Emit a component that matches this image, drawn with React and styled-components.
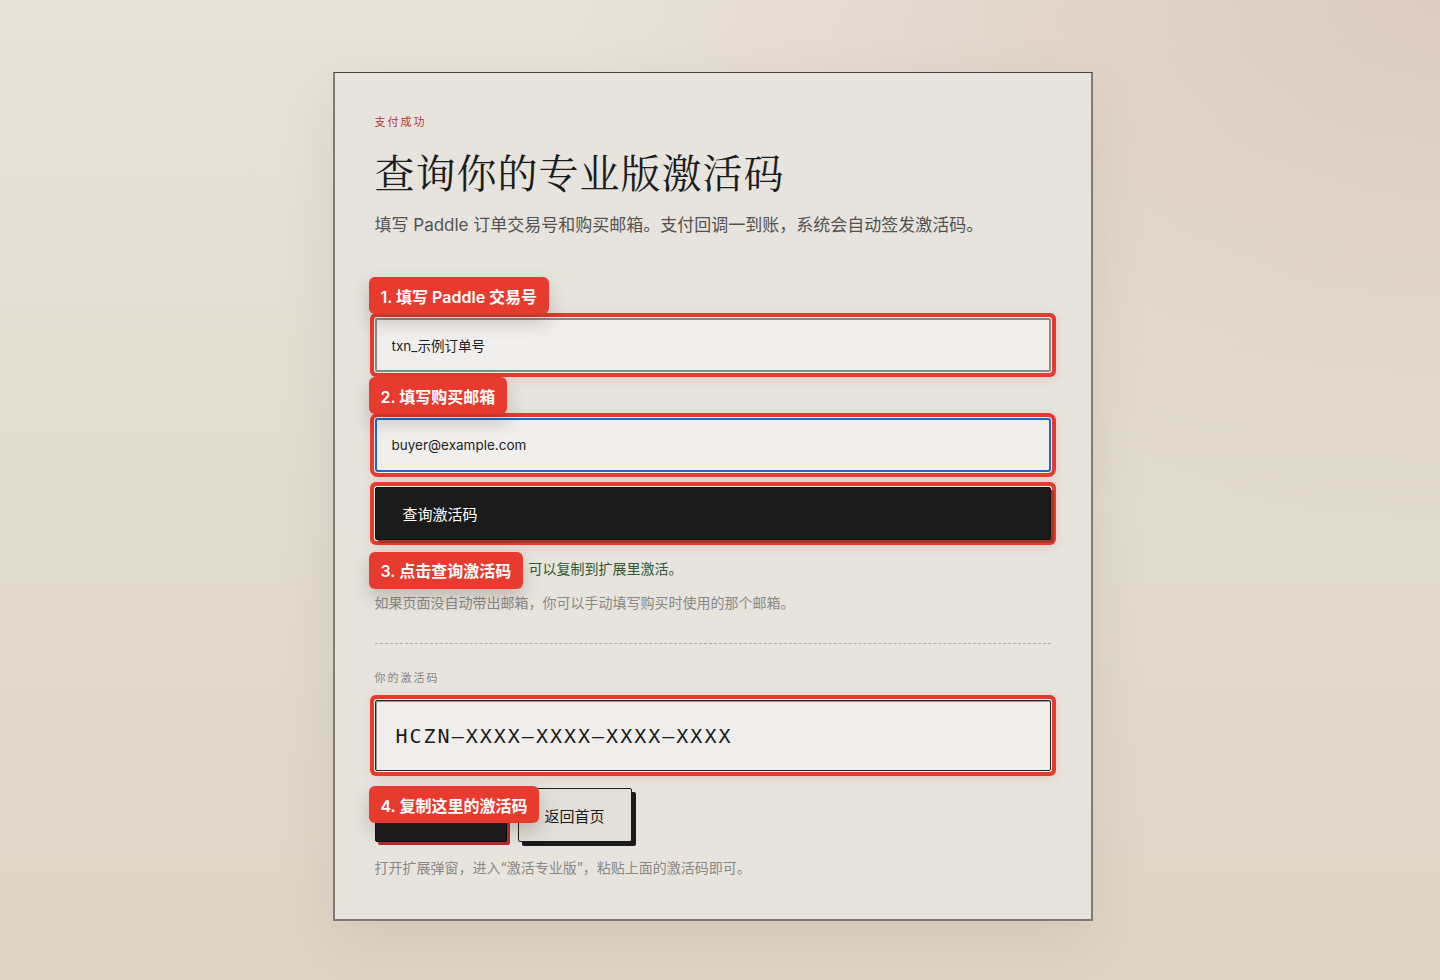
import styled, { createGlobalStyle, css } from 'styled-components'

const GlobalStyle = createGlobalStyle`
  html {
    overflow-y: scroll;
  }
  ::-webkit-scrollbar {
    width: 15px;
  }
  ::-webkit-scrollbar-track {
    background: #f8f8f8;
    border-left: 1px solid #ececec;
  }
  ::-webkit-scrollbar-thumb {
    background: #c1c1c1;
    border-radius: 8px;
    border: 3px solid #f8f8f8;
    border-left-width: 4px;
  }
  body {
    margin: 0;
    font-family: "Inter", "Noto Sans CJK SC", sans-serif;
    color: #1b1b1b;
    background:
      radial-gradient(ellipse 60% 55% at 100% 0%, #dccbc0 0%, rgba(220, 203, 192, 0) 100%),
      linear-gradient(180deg, #e8e2d9 0%, #e2dbcf 50%, #ddd5c5 100%);
    min-height: 100vh;
  }
`

const ring = css`
  0 0 0 1px #f3f1ec,
  0 0 0 5px #e63b2e,
  0 2px 12px 4px rgba(230, 59, 46, 0.18)
`

const Page = styled.main`
  display: flex;
  justify-content: center;
  padding: 72px 15px 72px 0;
`

const Card = styled.section`
  width: 760px;
  box-sizing: border-box;
  padding: 40px 40px 40px;
  background: #e7e4de;
  border: 1px solid #45433f;
  border-right: 2px solid #7e7b77;
  border-bottom: 2px solid #7e7b77;
  border-left: 2px solid #7e7b77;
  box-shadow: 0 18px 50px rgba(120, 100, 80, 0.12);
`

const Eyebrow = styled.div`
  font-size: 11px;
  line-height: 18px;
  letter-spacing: 2px;
  color: ${p => p.$tone === 'red' ? '#b5362c' : '#8a8580'};
  margin-top: ${p => p.$top || 0}px;
`

const Title = styled.h1`
  margin: 16px 0 0;
  font-family: "Noto Serif CJK SC", "Source Han Serif SC", "Liberation Serif", serif;
  font-weight: 400;
  font-size: 40px;
  line-height: 48px;
  letter-spacing: 1px;
  color: #1c1c1c;
`

const Lead = styled.p`
  margin: 18px 0 0;
  font-size: 17px;
  line-height: 24px;
  color: #545250;
`

const Form = styled.form`
  display: flex;
  flex-direction: column;
  margin-top: 41px;
`

const FieldGroup = styled.div`
  position: relative;
  padding-top: 40px;
  margin-top: ${p => p.$top || 0}px;
`

const Badge = styled.span`
  position: absolute;
  top: ${p => p.$top}px;
  left: -6px;
  z-index: 2;
  height: 37px;
  padding: 0 12px;
  display: inline-flex;
  align-items: center;
  background: #e63b2e;
  color: #fff;
  font-size: 16px;
  font-weight: 600;
  border-radius: 6px;
  white-space: nowrap;
  box-shadow: 0 8px 18px rgba(60, 30, 20, 0.22);
`

const Input = styled.input`
  display: block;
  width: 100%;
  box-sizing: border-box;
  height: 54px;
  padding: 0 15px;
  font-family: inherit;
  font-size: 13.5px;
  color: #1f1f1f;
  background: #f0efed;
  border: 2px solid ${p => p.$focused ? '#1b66d2' : '#8a8886'};
  border-radius: ${p => p.$focused ? 3 : 2}px;
  outline: none;
  box-shadow: ${ring};
`

const SubmitButton = styled.button`
  margin-top: 15px;
  height: 53px;
  padding: 0 27px;
  text-align: left;
  font-family: inherit;
  font-size: 15px;
  color: #fff;
  background: #1b1b1b;
  border: 1px solid #111;
  border-radius: 2px;
  box-shadow: 3px 3px 0 #a7342a, ${ring};
`

const Note = styled.p`
  position: relative;
  margin: ${p => p.$top}px 0 0;
  font-size: 14px;
  line-height: 22px;
  color: ${p => p.$tone === 'ok' ? '#2e5a33' : '#8b8884'};
`

const Divider = styled.hr`
  margin: 29px 0 0;
  border: 0;
  border-top: 1px dashed #aeaaa4;
`

const CodeBox = styled.div`
  margin-top: 13px;
  height: 71px;
  box-sizing: border-box;
  display: flex;
  align-items: center;
  padding: 0 20px;
  background: #efeeec;
  border: 1px solid #262626;
  border-radius: 2px;
  font-family: "DejaVu Sans Mono", "Liberation Mono", monospace;
  font-size: 20px;
  letter-spacing: 2px;
  color: #1b1b1b;
  box-shadow: inset 1px 1px 0 #9a9894, ${ring};
`

const Actions = styled.div`
  position: relative;
  display: flex;
  gap: 11px;
  margin-top: 17px;
`

const ActionButton = styled.button`
  height: 54px;
  padding: 0 26px;
  font-family: inherit;
  font-size: 15px;
  border-radius: 2px;
  ${p => p.$primary ? css`
    width: 132px;
    padding-bottom: 22px;
    color: #fff;
    background: #1b1b1b;
    border: 1px solid #111;
    box-shadow: 3px 3px 0 #a7342a;
  ` : css`
    color: #1b1b1b;
    background: #e2dfd9;
    border: 1px solid #1b1b1b;
    box-shadow: 4px 4px 0 #1b1b1b;
  `}
`

export default function App() {
  return (
    <>
      <GlobalStyle />
      <Page>
        <Card>
          <Eyebrow $tone="red">支付成功</Eyebrow>
          <Title>查询你的专业版激活码</Title>
          <Lead>填写 Paddle 订单交易号和购买邮箱。支付回调一到账，系统会自动签发激活码。</Lead>

          <Form onSubmit={e => e.preventDefault()}>
            <FieldGroup>
              <Badge $top={-1}>1. 填写 Paddle 交易号</Badge>
              <Input defaultValue="txn_示例订单号" />
            </FieldGroup>
            <FieldGroup $top={6}>
              <Badge $top={-1}>2. 填写购买邮箱</Badge>
              <Input $focused defaultValue="buyer@example.com" />
            </FieldGroup>
            <SubmitButton type="submit">查询激活码</SubmitButton>
          </Form>

          <Note $tone="ok" $top={18}>
            <Badge $top={-6}>3. 点击查询激活码</Badge>
            激活码已签发到该订单，可以复制到扩展里激活。
          </Note>
          <Note $top={12}>如果页面没自动带出邮箱，你可以手动填写购买时使用的那个邮箱。</Note>

          <Divider />

          <Eyebrow $top={25}>你的激活码</Eyebrow>
          <CodeBox>HCZN–XXXX–XXXX–XXXX–XXXX</CodeBox>

          <Actions>
            <Badge $top={-2}>4. 复制这里的激活码</Badge>
            <ActionButton $primary>复制激活码</ActionButton>
            <ActionButton>返回首页</ActionButton>
          </Actions>

          <Note $top={15}>打开扩展弹窗，进入“激活专业版”，粘贴上面的激活码即可。</Note>
        </Card>
      </Page>
    </>
  )
}
